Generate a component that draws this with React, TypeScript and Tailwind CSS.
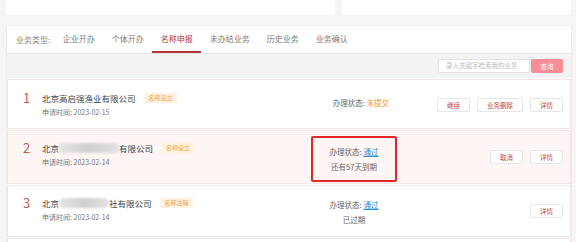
const tabs = ["企业开办", "个体开办", "名称申报", "未办结业务", "历史业务", "业务确认"];

function Blur({ w, pill }: { w: number; pill?: boolean }) {
  return (
    <span
      className={
        "inline-block h-[10px] bg-gradient-to-r from-[#e6e6e6] via-[#cfcfcf] to-[#e2e2e2] blur-[0.8px] " +
        (pill ? "rounded-full" : "rounded-[1px]")
      }
      style={{ width: w }}
    />
  );
}

function Badge({ text }: { text: string }) {
  return (
    <span className="ml-[9px] h-[10px] px-[4px] bg-[#fff1de] text-[#f2a447] text-[6px] leading-[10px] rounded-[1px]">
      {text}
    </span>
  );
}

function Btn({ label }: { label: string }) {
  return (
    <button className="h-[14px] px-[9px] border border-[#e6e6e6] rounded-[2px] bg-white text-[6.5px] leading-none text-[#c0433f]">
      {label}
    </button>
  );
}

export default function App() {
  return (
    <div className="w-[576px] h-[242px] overflow-hidden bg-[#f5f5f5] font-['Noto_Sans_CJK_SC','Liberation_Sans',sans-serif]">
      <div className="flex gap-[7px] pl-[6px]">
        <div className="w-[329px] h-[15px] bg-white" />
        <div className="w-[229px] h-[15px] bg-white" />
      </div>

      <div className="mt-[10px] ml-[6px] w-[566px] bg-white border border-[#ececec] border-b-0">
        {/* tabs */}
        <div className="h-[28px] flex items-stretch pl-[9px] border-b border-[#e6e6e6] text-[8px]">
          <span className="flex items-center text-[#888] mr-[4px]">业务类型:</span>
          {tabs.map((t) => (
            <span
              key={t}
              className={
                "flex items-center px-[8.5px] border-b-2 " +
                (t === "名称申报" ? "text-[#b5353b] border-[#b5353b]" : "text-[#7a7a7a] border-transparent")
              }
            >
              {t}
            </span>
          ))}
        </div>

        {/* search */}
        <div className="h-[24px] bg-[#f3f3f3] flex items-center justify-end pr-[8px]">
          <div className="w-[92px] h-[14px] bg-white border border-[#e2e2e2] rounded-[2px] flex items-center pl-[7px] text-[6.5px] text-[#bdbdbd]">
            录入关键字检索我的业务
          </div>
          <button className="ml-[1px] w-[32px] h-[14px] rounded-[2px] bg-[#f98d97] text-white text-[6.5px] leading-none">
            查询
          </button>
        </div>

        {/* rows */}
        <div className="flex flex-col gap-[1px] pt-[1px]">
          {/* row 1 */}
          <div className="h-[50px] flex items-center border border-[#f4e6e4] bg-white">
            <div className="flex-1 flex items-start pl-[15px]">
              <span className="w-[19px] text-[13px] leading-[14px] text-[#c75a56]">1</span>
              <div className="flex flex-col">
                <div className="flex items-center h-[14px] text-[8.5px] text-[#444]">
                  北京高启强渔业有限公司
                  <Badge text="名称设立" />
                </div>
                <div className="mt-[2px] text-[7px] text-[#777] leading-[10px]">申请时间: 2023-02-15</div>
              </div>
            </div>
            <div className="w-[90px] pl-[10px] text-center text-[7.5px] text-[#666] mb-[3px]">
              办理状态: <span className="text-[#f39a2b]">未提交</span>
            </div>
            <div className="w-[169px] flex justify-end items-center gap-[7px] pr-[7px] mt-[2px]">
              <Btn label="继续" />
              <Btn label="业务删除" />
              <Btn label="详情" />
            </div>
          </div>

          {/* row 2 */}
          <div className="h-[54px] flex items-center border border-[#f4e6e4] bg-[#fdf6f5]">
            <div className="flex-1 flex items-start pl-[15px] mb-[6px]">
              <span className="w-[19px] text-[13px] leading-[14px] text-[#c75a56]">2</span>
              <div className="flex flex-col">
                <div className="flex items-center h-[14px] text-[8.5px] text-[#444]">
                  北京
                  <Blur w={60} />
                  有限公司
                  <Badge text="名称设立" />
                </div>
                <div className="mt-[2px] text-[7px] text-[#777] leading-[10px]">申请时间: 2023-02-14</div>
              </div>
            </div>
            <div className="self-stretch w-[86px] mr-[2px] mt-[5px] mb-[1px] border-2 border-[#e2262a] rounded-[2px] flex flex-col items-center justify-center text-[7.5px] text-[#666] leading-[15px]">
              <span>
                办理状态: <span className="text-[#2f8fd4] underline">通过</span>
              </span>
              <span>还有57天到期</span>
            </div>
            <div className="w-[171px] flex justify-end items-center gap-[7px] pr-[7px]">
              <Btn label="取消" />
              <Btn label="详情" />
            </div>
          </div>

          {/* row 3 */}
          <div className="h-[52px] flex items-center border border-[#f4e6e4] bg-white">
            <div className="flex-1 flex items-start pl-[15px] mb-[4px]">
              <span className="w-[19px] text-[13px] leading-[14px] text-[#c75a56]">3</span>
              <div className="flex flex-col">
                <div className="flex items-center h-[14px] text-[8.5px] text-[#444]">
                  北京
                  <Blur w={50} pill />
                  社有限公司
                  <Badge text="名称注销" />
                </div>
                <div className="mt-[2px] text-[7px] text-[#777] leading-[10px]">申请时间: 2023-02-14</div>
              </div>
            </div>
            <div className="w-[86px] mr-[2px] flex flex-col items-center text-[7.5px] text-[#666] leading-[15px] mt-[2px]">
              <span>
                办理状态: <span className="text-[#2f8fd4] underline">通过</span>
              </span>
              <span>已过期</span>
            </div>
            <div className="w-[171px] flex justify-end items-center pr-[7px]">
              <Btn label="详情" />
            </div>
          </div>

          <div className="h-[10px] border border-[#f4e6e4] bg-white" />
        </div>
      </div>
    </div>
  );
}
